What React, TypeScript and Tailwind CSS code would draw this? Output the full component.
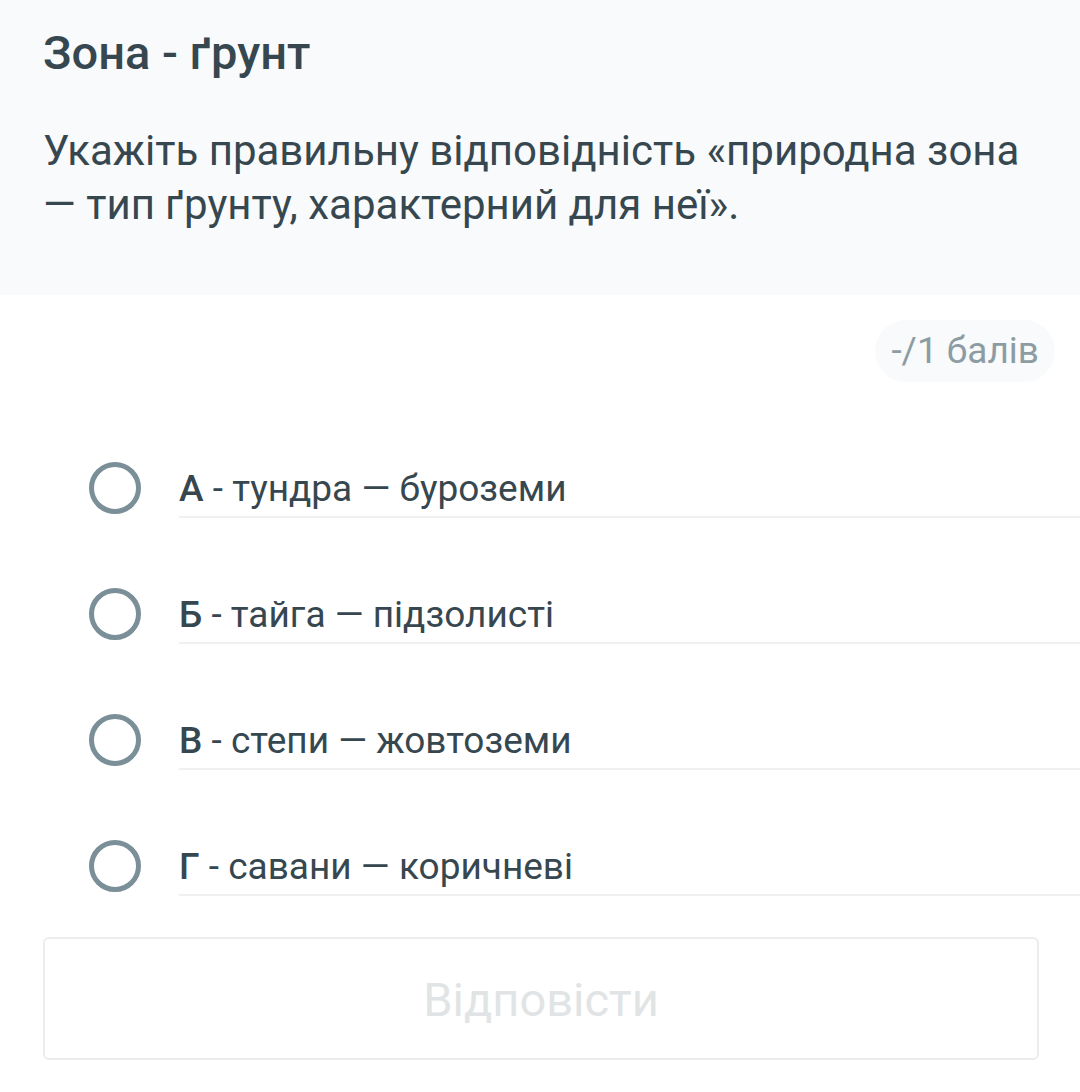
const options = [
  { letter: "А", text: "тундра — буроземи" },
  { letter: "Б", text: "тайга — підзолисті" },
  { letter: "В", text: "степи — жовтоземи" },
  { letter: "Г", text: "савани — коричневі" },
]

export default function App() {
  return (
    <div className="w-[1080px] h-[1092px] bg-white text-[#37474f] font-['Roboto',sans-serif] overflow-hidden">
      {/* question header */}
      <div className="h-[295px] bg-[#f8fafb] px-[43px] pt-[25px]">
        <h1 className="text-[47px] leading-[56px] font-medium">Зона - ґрунт</h1>
        <p className="mt-[43px] text-[42px] leading-[54px]">
          Укажіть правильну відповідність «природна зона — тип ґрунту, характерний для неї».
        </p>
      </div>

      <div className="flex justify-end pr-[25px] mt-[25px]">
        <div className="h-[62px] px-[16px] rounded-full bg-[#f8fafb] flex items-center text-[37px] text-[#8d9ca2]">
          -/1 балів
        </div>
      </div>

      <div className="mt-[10px]">
        {options.map((o) => (
          <div key={o.letter} className="flex items-end h-[126px]">
            <div className="h-[60px] w-[179px] flex items-center pl-[89px]">
              <div className="w-[52px] h-[52px] rounded-full border-[5px] border-[#7b8f98]" />
            </div>
            <div className="flex-1 h-[60px] flex items-center pt-[4px] border-b-2 border-[#eef0f1] text-[37px]">
              <span className="font-medium">{o.letter}</span>
              <span>&nbsp;- {o.text}</span>
            </div>
          </div>
        ))}
      </div>

      <div className="px-[43px] pr-[41px] mt-[41px]">
        <button className="w-full h-[123px] pt-[3px] rounded-[6px] border-2 border-[#ebeded] bg-white text-[47px] text-[#e1e4e5]">
          Відповісти
        </button>
      </div>
    </div>
  )
}
